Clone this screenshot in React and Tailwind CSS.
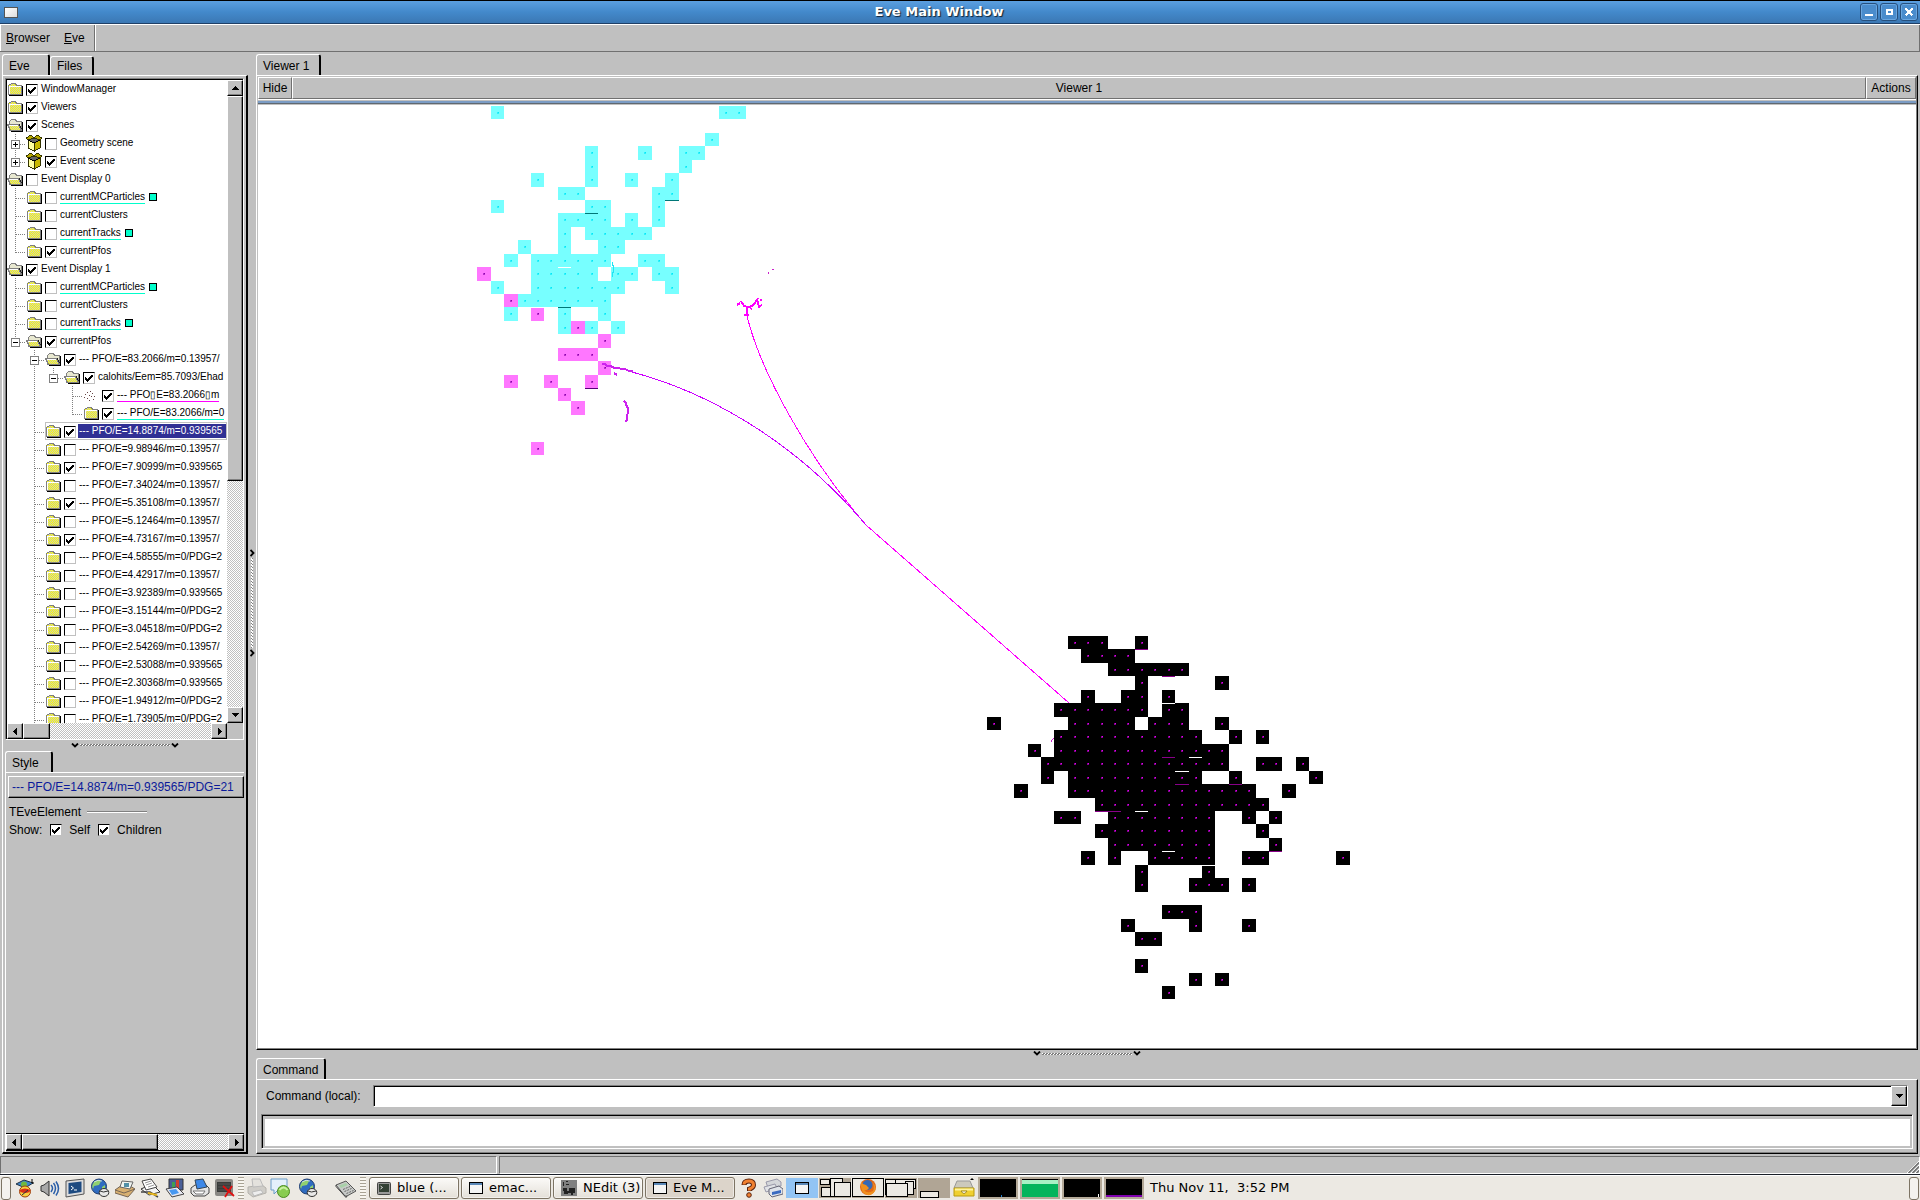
import React, { useId } from "react";

const RAISED =
  "border border-t-white border-l-white border-b-black border-r-black shadow-[inset_-1px_-1px_0_#808080]";
const DITHER =
  "bg-[repeating-conic-gradient(#c0c0c0_0_25%,#ffffff_0_50%)] bg-[length:2px_2px]";

/* ---------- tree data: guides use | T L or . for each level ---------- */
const pfo = (text, checked, extra = {}) => ({ g: ".T", icon: "folder", checked, text: "--- PFO/E=" + text, ...extra });
const ROWS = [
  { g: "", icon: "folder", checked: true, text: "WindowManager" },
  { g: "", icon: "folder", checked: true, text: "Viewers" },
  { g: "", icon: "open", checked: true, text: "Scenes" },
  { g: "T", box: "+", icon: "scene", text: "Geometry scene" },
  { g: "L", box: "+", icon: "scene", checked: true, text: "Event scene" },
  { g: "", icon: "open", text: "Event Display 0" },
  { g: "T", icon: "folder", text: "currentMCParticles", mark: "c", square: true },
  { g: "T", icon: "folder", text: "currentClusters" },
  { g: "T", icon: "folder", text: "currentTracks", mark: "c", square: true },
  { g: "L", icon: "folder", checked: true, text: "currentPfos" },
  { g: "", icon: "open", checked: true, text: "Event Display 1" },
  { g: "T", icon: "folder", text: "currentMCParticles", mark: "c", square: true },
  { g: "T", icon: "folder", text: "currentClusters" },
  { g: "T", icon: "folder", text: "currentTracks", mark: "c", square: true },
  { g: "L", box: "-", icon: "open", checked: true, text: "currentPfos" },
  pfo("83.2066/m=0.13957/", true, { box: "-", icon: "open" }),
  { g: ".|L", box: "-", icon: "open", checked: true, text: "calohits/Eem=85.7093/Ehad" },
  { g: ".|.T", icon: "dots", checked: true, text: "--- PFO▯E=83.2066▯m", mark: "m" },
  { g: ".|.L", icon: "folder", checked: true, text: "--- PFO/E=83.2066/m=0", mark: "c" },
  pfo("14.8874/m=0.939565", true, { selected: true }),
  pfo("9.98946/m=0.13957/", false),
  pfo("7.90999/m=0.939565", true),
  pfo("7.34024/m=0.13957/", false),
  pfo("5.35108/m=0.13957/", true),
  pfo("5.12464/m=0.13957/", false),
  pfo("4.73167/m=0.13957/", true),
  pfo("4.58555/m=0/PDG=2", false),
  pfo("4.42917/m=0.13957/", false),
  pfo("3.92389/m=0.939565", false),
  pfo("3.15144/m=0/PDG=2", false),
  pfo("3.04518/m=0/PDG=2", false),
  pfo("2.54269/m=0.13957/", false),
  pfo("2.53088/m=0.939565", false),
  pfo("2.30368/m=0.939565", false),
  pfo("1.94912/m=0/PDG=2", false),
  pfo("1.73905/m=0/PDG=2", false),
];

function Guide({ kind, box }) {
  return (
    <svg width="19" height="18" shapeRendering="crispEdges" className="shrink-0" aria-hidden="true">
      <g stroke="#808080" strokeDasharray="1 1" fill="none">
        {kind !== "." && <path d={kind === "L" ? "M8.5 0V11" : "M8.5 0V18"} />}
        {(kind === "T" || kind === "L") && <path d="M9 10.5H19" />}
      </g>
      {box && (
        <g>
          <rect x="4.5" y="6.5" width="8" height="8" fill="#fff" stroke="#808080" />
          <path d={box === "+" ? "M6 10.5H11M8.5 8V13" : "M6 10.5H11"} stroke="#000" />
        </g>
      )}
    </svg>
  );
}

function TreeIcon({ kind }) {
  return (
    <svg width="17" height="18" shapeRendering="crispEdges" className="mr-[2px] shrink-0" aria-hidden="true">
      {kind === "folder" && (
        <g>
          <path d="M15.5 6V16M2 15.5H16" stroke="#000" />
          <path d="M1.5 14.5V5.5L2.5 4.5H3.5L4.5 3.5H8.5L9.5 5.5H14.5V14.5Z" fill="url(#dither)" stroke="#808080" />
          <path d="M2.5 14V6.5H14" stroke="#fff" fill="none" />
        </g>
      )}
      {kind === "open" && (
        <g>
          <path d="M15.5 6V16M4 15.5H16" stroke="#000" />
          <path d="M2.5 14.5V5.5L4.5 3.5H8.5L9.5 5.5H14.5V14.5Z" fill="#e8e8d0" stroke="#808080" />
          <path d="M0.5 8.5H11.5L14.5 14.5H3.5Z" fill="url(#dither)" stroke="#808080" />
          <path d="M2 9.5H11" stroke="#fff" />
          <path d="M12 8L14.5 13" stroke="#222" />
        </g>
      )}
      {kind === "scene" && (
        <g>
          <path d="M2 6L8 9V17L2 14Z" fill="#ffffa0" stroke="#333300" />
          <path d="M8 9L14 6V14L8 17Z" fill="#c8b800" stroke="#333300" />
          <path d="M2 6L8 3L14 6L8 9Z" fill="#666" stroke="#000" />
          <path d="M2 6L0 4L5 1L8 4ZM14 6L16 4L11 1L8 4Z" fill="#b8a800" stroke="#333300" />
        </g>
      )}
      {kind === "dots" && (
        <g fill="#664444">
          {[[2, 8], [4, 6], [6, 9], [4, 12], [9, 7], [8, 10], [6, 14], [10, 13], [7, 5], [1, 11], [11, 10]].map(([x, y]) => (
            <rect key={x + "-" + y} x={x} y={y} width="1" height="1" />
          ))}
        </g>
      )}
    </svg>
  );
}

function Check({ id, checked }) {
  return (
    <span className="grid size-3 shrink-0">
      <input
        id={id}
        type="checkbox"
        defaultChecked={checked}
        className="peer col-start-1 row-start-1 size-3 appearance-none border border-t-black border-l-black border-b-[#c0c0c0] border-r-[#c0c0c0] bg-white"
      />
      <svg
        viewBox="0 0 12 12"
        shapeRendering="crispEdges"
        className="pointer-events-none invisible col-start-1 row-start-1 size-3 peer-checked:visible"
        aria-hidden="true"
      >
        <path d="M2 5h1v1h1v1h1V6h1V5h1V4h1V3h2v2H9v1H8v1H7v1H6v1H5V10H4V9H3V8H2Z" />
      </svg>
    </span>
  );
}

function TreeRow({ row }) {
  const id = useId();
  const guides = row.g.split("");
  const mark = row.mark === "c" ? "border-b border-[#00ffcc]" : row.mark === "m" ? "border-b border-[#ff00ff]" : "";
  return (
    <li className="flex h-[18px] items-center overflow-hidden whitespace-nowrap">
      {guides.map((k, i) => (
        <Guide key={i} kind={k} box={i === guides.length - 1 ? row.box : undefined} />
      ))}
      <div
        className={
          row.selected
            ? "flex h-[18px] min-w-0 flex-1 items-center outline outline-1 -outline-offset-1 outline-[#c0c0c0]"
            : "flex h-[18px] min-w-0 flex-1 items-center"
        }
      >
        <TreeIcon kind={row.icon} />
        <span className="mt-0.5 flex">
          <Check id={id} checked={row.checked} />
        </span>
        <label
          htmlFor={id}
          className={
            row.selected
              ? "ml-0.5 h-[14px] flex-1 bg-[#303094] pl-px leading-[14px] text-white"
              : "ml-[3px] h-[14px] leading-[14px] " + mark
          }
        >
          {row.text}
        </label>
        {row.square && <span className="ml-1 size-2 border border-black bg-[#00ffcc]" />}
      </div>
    </li>
  );
}

function Arrow({ dir }) {
  const d = {
    up: "M4 2h1v1h1v1h1v1h1v1H1V5h1V4h1V3h1Z",
    down: "M1 2h7v1H7v1H6v1H5v1H4V5H3V4H2V3H1Z",
    left: "M2 4h1V3h1V2h1V1h1v7H5V7H4V6H3V5H2Z",
    right: "M3 1h1v1h1v1h1v1h1v1H6v1H5v1H4v1H3Z",
  }[dir];
  return (
    <svg width="9" height="9" shapeRendering="crispEdges" aria-hidden="true">
      <path d={d} />
    </svg>
  );
}

function ScrollButton({ dir, label }) {
  return (
    <button aria-label={label} className={"flex size-4 shrink-0 items-center justify-center bg-[#c0c0c0] " + RAISED}>
      <Arrow dir={dir} />
    </button>
  );
}

function Tab({ children, active, className = "" }) {
  return (
    <button
      role="tab"
      aria-selected={!!active}
      className={
        "flex items-center whitespace-nowrap rounded-t-[3px] border-t border-l border-r-2 border-t-white border-l-white border-r-black bg-[#c0c0c0] pl-1.5 " +
        (active ? "-mb-px h-[22px] " : "h-[19px] ") +
        className
      }
    >
      {children}
    </button>
  );
}

function HSplit() {
  return (
    <div className="flex h-full items-center justify-center gap-px">
      <Chevron />
      <div className="h-[2px] w-[90px] bg-[repeating-conic-gradient(#808080_0_25%,#ffffff_0_50%)] bg-[length:3px_2px]" />
      <Chevron />
    </div>
  );
}
function Chevron() {
  return (
    <svg width="8" height="5" aria-hidden="true">
      <path d="M1 0.5L4 3.5L7 0.5" stroke="#000" strokeWidth="1.8" fill="none" />
    </svg>
  );
}

/* ---------- calorimeter hits ---------- */
const range = (a, b) => Array.from({ length: b - a + 1 }, (_, i) => a + i);
const expand = (table) =>
  table.flatMap(([row, ...spans]) =>
    spans.flatMap((s) => (Array.isArray(s) ? range(s[0], s[1]) : [s]).map((c) => [c, row]))
  );
const CYAN = expand([
  [0, 1, 18, 19], [2, 17], [3, 8, 12, 15, 16], [4, 8, 15], [5, 4, 8, 11, 14], [6, 6, 7, 13, 14],
  [7, 1, 8, 9, 13], [8, [6, 9], 11, 13], [9, 6, [8, 12]], [10, 3, 6, 9, 10], [11, 2, [4, 9], 12, 13],
  [12, [4, 8], 10, 11, 13, 14], [13, 1, [4, 10], 14], [14, [3, 9]], [15, 2, 6, 9], [16, 6, 8, 10],
]);
const PINK = expand([
  [12, 0], [14, 2], [15, 4], [16, 7], [17, 9], [18, 6, 7, 8], [19, 9], [20, 2, 5, 8], [21, 6], [22, 7], [25, 4],
]);
const BLACK = expand([
  [0, 6, 7, 8, 11], [1, [7, 10]], [2, [9, 14]], [3, 11, 17], [4, 7, 10, 11, 13], [5, [5, 11], 13, 14],
  [6, 0, [6, 10], [12, 14], 17], [7, [5, 15], 18, 20], [8, 3, [5, 17]], [9, [4, 17], 20, 21, 23],
  [10, 4, [6, 15], 18, 24], [11, 2, [6, 19], 22], [12, [8, 20]], [13, 5, 6, [9, 16], 19, 21],
  [14, [8, 16], 20], [15, [9, 16], 21], [16, 7, 9, [12, 16], 19, 20, 26], [17, 11, 16],
  [18, 11, [15, 17], 19], [20, 13, 14, 15], [21, 10, 15, 19], [22, 11, 12], [24, 11], [25, 15, 17], [26, 13],
]);
const colX = (x0, c) => Math.round(x0 + 0.25 + 13.42 * c);

function Hits({ cells, x0, y0, pitch, fill, dot }) {
  const y = (r) => Math.round(y0 + pitch * r);
  return (
    <g>
      {cells.map(([c, r]) => {
        const x = colX(x0, c);
        return <rect key={c + "," + r} x={x} y={y(r)} width={colX(x0, c + 1) - x} height={y(r + 1) - y(r)} fill={fill} />;
      })}
      {cells.map(([c, r]) => (
        <g key={"d" + c + "," + r} fill={dot}>
          <rect x={colX(x0, c) + 6} y={y(r) + 6} width="2" height="2" opacity="0.6" />
          <rect x={colX(x0, c) + 7} y={y(r) + 6} width="1" height="1" />
        </g>
      ))}
    </g>
  );
}
function Edges({ list, x0, y0, pitch, fill }) {
  return list.map(([c, r]) => (
    <rect
      key={c + "," + r}
      x={colX(x0, c)}
      y={Math.round(y0 + pitch * (r + 1))}
      width={colX(x0, c + 1) - colX(x0, c)}
      height="1"
      fill={fill}
    />
  ));
}

function EventDisplay() {
  const a = { x0: 477, y0: 106, pitch: 13.43 };
  const b = { x0: 987, y0: 636, pitch: 13.46 };
  return (
    <svg className="block h-full w-full bg-white" role="img" aria-label="Event display" shapeRendering="crispEdges">
      <g transform="translate(-258 -105)">
        <Hits cells={CYAN} {...a} fill="#77ffff" dot="#00e8f8" />
        <Hits cells={PINK} {...a} fill="#ff77ff" dot="#8800aa" />
        <Edges {...a} list={[[8, 7], [14, 6], [6, 14]]} fill="#007777" />
        <Edges {...a} list={[[8, 20]]} fill="#550077" />
        <Edges {...a} list={[[6, 11], [4, 14]]} fill="#ffffff" />
        <path d="M612 262v3h1v7h-1v5" stroke="#22e4f4" fill="none" />
        <Hits cells={BLACK} {...b} fill="#000" dot="#e000f0" />
        <Edges {...b} list={[[13, 4], [15, 8], [14, 9], [11, 12], [13, 15], [16, 16]]} fill="#ffffff" />
        <Edges {...b} list={[[11, 0], [13, 2], [13, 8], [14, 10], [18, 10], [8, 12], [9, 12], [21, 15]]} fill="#880088" />
        <g fill="none">
          <path d="M747 316C760 370 807 457 866 525L1069 703" stroke="#ff00ff" />
          <path d="M632 372C700 390 790 435 866 525" stroke="#cc00ff" />
          <path d="M602 364h3l2 2h4l3 2h5l2 1h4l4 2h4M614 373l3 2M624 401l2 2v2l2 3v5l-1 2v4l-1 3" stroke="#cc22ee" strokeWidth="2" />
          <path d="M737 305l3-2M741 301l3 5 4 1 4-1 3-3 3-5M747 307v9M744 315h5M758 301l1 7M760 306l2-1M760 300h2M750 308l2 1" stroke="#ff00ff" strokeWidth="2" />
          <path d="M768 274l1-2M772 269h2M1051 742l1-2M1052 740l2-2" stroke="#cc22cc" />
        </g>
      </g>
    </svg>
  );
}

/* ---------- desktop panel icons ---------- */
const Icon = ({ children }) => (
  <svg viewBox="0 0 20 20" className="size-5 shrink-0" aria-hidden="true">
    {children}
  </svg>
);
const MenuIcon = () => (
  <Icon>
    <path d="M1 6L9 2L18 5L10 10Z" fill="#3f86cc" stroke="#234" />
    <circle cx="9" cy="6.500" r="3" fill="#70b840" />
    <circle cx="10" cy="13.500" r="5.500" fill="#f8d040" stroke="#a04010" />
    <path d="M4.500 12q5.500-3 11 0l-1 2q-4 2-9 0Z" fill="#d83018" />
    <path d="M7 17l6-5" stroke="#234" />
    <path d="M17 1v4h2" stroke="#000" fill="none" />
  </Icon>
);
const SpeakerIcon = () => (
  <Icon>
    <path d="M1 8L4 7L9 3V18L4 14L1 13Z" fill="#a8a8a8" stroke="#333" />
    <path d="M11 7q3 3 0 7M13.500 5q4 5 0 11M16 3.500q5 7 0 14" stroke="#2a5ea8" strokeWidth="1.500" fill="none" />
  </Icon>
);
const TerminalIcon = () => (
  <Icon>
    <path d="M1 3L19 1V16L1 19Z" fill="#ddd" stroke="#555" />
    <path d="M3.500 5L16.500 3.500V14L3.500 16Z" fill="#1d4a80" />
    <path d="M6 8l2.500 2L6 12M9 12h3" stroke="#fff" fill="none" />
  </Icon>
);
const GlobeIcon = () => (
  <Icon>
    <circle cx="9" cy="8.500" r="7.500" fill="#2f6cc0" stroke="#1d3c70" />
    <path d="M4 4q4-3 7-1l-2 4-5 1-1 3Q1 8 4 4ZM12 9l3-2v4l-3 1Z" fill="#90d070" />
    <path d="M4 4q4-3 8-1" stroke="#fff" opacity=".7" fill="none" />
    <ellipse cx="14" cy="14.500" rx="4.800" ry="4" fill="#e8e8e8" stroke="#333" />
    <path d="M10 13q3 2 8 0" stroke="#333" fill="none" />
  </Icon>
);
const MailIcon = () => (
  <Icon>
    <path d="M0 12L10 5L20 11L13 19L0 15Z" fill="#d8b070" stroke="#765" />
    <path d="M7 3L18 4L15 11L5 9Z" fill="#f0f4f0" stroke="#666" />
    <rect x="9" y="5" width="5" height="4" fill="#5090a8" />
    <path d="M0 12l9 3 11-4" stroke="#765" fill="none" />
  </Icon>
);
const PapersIcon = () => (
  <Icon>
    <path d="M1 11L12 6L20 14L9 17Z" fill="#f4f4f4" stroke="#333" />
    <path d="M2 3L11 1L17 9L6 12Z" fill="#fff" stroke="#444" />
    <path d="M5 5l6-2M6 7l6-2M8 9l6-2" stroke="#999" />
    <path d="M1 14h9l8 5" stroke="#444" strokeWidth="1.500" fill="none" />
    <path d="M8 15l9 2" stroke="#e8b820" strokeWidth="2" />
  </Icon>
);
const SlidesIcon = () => (
  <Icon>
    <path d="M4 1H18V12H4Z" fill="#4a5f98" stroke="#333" />
    <rect x="7" y="4" width="3" height="6" fill="#40a050" />
    <rect x="11" y="2" width="3" height="8" fill="#d04030" />
    <path d="M1 11L12 9L19 16L7 19Z" fill="#e8e8f0" stroke="#444" />
    <path d="M4 12L11 11L14 15L7 17Z" fill="#4898f0" />
  </Icon>
);
const PrinterIcon = () => (
  <Icon>
    <path d="M1 10L5 7H16L19 10V15L15 18H4L1 15Z" fill="#e4e4e4" stroke="#444" />
    <path d="M5 2L13 1L17 9L7 11Z" fill="#3d88e8" stroke="#345" />
    <path d="M3 13h12l-2 3H6Z" fill="#fff" stroke="#777" />
  </Icon>
);
const DeadScreenIcon = () => (
  <Icon>
    <rect x="0" y="1" width="18" height="17" rx="2" fill="#8a8884" />
    <rect x="2" y="4" width="14" height="10" fill="#3a3d3a" />
    <path d="M3 6h12M3 9h12M3 12h12" stroke="#555" />
    <path d="M8 8l11 10M17 8l-7 11" stroke="#e01010" strokeWidth="1.800" />
  </Icon>
);
const GreyPrinterIcon = () => (
  <Icon>
    <path d="M1 9L15 7L19 10V15L6 19L1 15Z" fill="#cfcdc8" stroke="#b4b2ac" />
    <path d="M5 1H13L16 8L6 9Z" fill="#e4e2dd" stroke="#bbb" />
    <path d="M5 14l9-2 2 3-9 3Z" fill="#eee" stroke="#bbb" />
  </Icon>
);
const ChatIcon = () => (
  <Icon>
    <path d="M1 1H17V12H8L4 16V12H1Z" fill="#e4f0fb" stroke="#6a9cc8" />
    <circle cx="13.500" cy="13.500" r="6" fill="#88cc50" stroke="#4a8a20" />
    <path d="M9.500 12q4-5 8 0" stroke="#c8f0a0" strokeWidth="2" fill="none" />
  </Icon>
);
const CalcIcon = () => (
  <svg viewBox="0 0 22 20" className="h-5 w-[22px] shrink-0" aria-hidden="true">
    <path d="M1 7L11 3L21 13L12 18L10 18Z" fill="#c8cac8" stroke="#555" />
    <path d="M4 7.500L11 5L13 7L6 10Z" fill="#a8d0a8" />
    <path d="M8 11.500l7-3M9.500 13.500l7-3M11.500 15.500l7-3" stroke="#666" strokeDasharray="2 1" />
    <path d="M1 7v1.500L11 19.500l1-1.500" stroke="#444" fill="none" />
  </svg>
);
const HelpIcon = () => (
  <svg viewBox="0 0 16 20" className="h-5 w-4" aria-hidden="true">
    <path d="M3 7Q3 3 8 3Q12.500 3 12.500 7Q12.500 9.500 8.500 11V13" stroke="#5b2410" strokeWidth="5" fill="none" />
    <path d="M3 6.500Q3 3 8 3Q12.500 3 12.500 7Q12.500 9.500 8.500 11V12.500" stroke="#f08030" strokeWidth="3" fill="none" />
    <circle cx="8" cy="17" r="2.300" fill="#f08030" stroke="#5b2410" />
  </svg>
);
const DrivesIcon = () => (
  <Icon>
    <path d="M3 4L14 1L18 4V8L5 10Z" fill="#d4d6da" stroke="#99a" />
    <path d="M1 9L12 6L14 10L3 14Z" fill="#e0e2e6" stroke="#99a" />
    <path d="M6 11L16 8L20 11V16L9 19L6 16Z" fill="#dfe3ea" stroke="#667" />
    <path d="M9 14l9-2v3l-9 2Z" fill="#3a6ac0" />
  </Icon>
);
const DrawerIcon = () => (
  <svg viewBox="0 0 22 20" className="h-5 w-[22px]" aria-hidden="true">
    <path d="M4 3H17L20 10H1Z" fill="#ccc9bc" stroke="#999" />
    <path d="M1 10H21V18H1Z" fill="#f0d030" stroke="#b89a10" />
    <path d="M2 11.500h18" stroke="#fff4a0" strokeWidth="2" />
    <path d="M8 13q3 5 6 0Z" fill="#fff" stroke="#a08a20" />
    <path d="M17 2l2-2 2 2Z" fill="#000" />
  </svg>
);
const WindowGlyph = () => (
  <svg width="14" height="12" shapeRendering="crispEdges" aria-hidden="true">
    <rect x="0.500" y="0.500" width="13" height="11" fill="#f4f4f4" stroke="#000" />
    <rect x="1" y="1" width="12" height="2" fill="#5a88b8" />
  </svg>
);
const TermGlyph = () => (
  <svg width="14" height="13" aria-hidden="true">
    <rect x="0.500" y="0.500" width="13" height="12" rx="1" fill="#999" stroke="#444" />
    <rect x="2" y="2" width="10" height="8" fill="#334034" />
    <path d="M3.500 4l2 1.500-2 1.500" stroke="#ddd" fill="none" />
  </svg>
);
const NeditGlyph = () => (
  <svg width="16" height="16" shapeRendering="crispEdges" aria-hidden="true">
    <rect width="16" height="16" fill="#808080" />
    <path d="M2 2h1v4H2ZM5 1h2v1H5ZM5 4h3v1H5ZM2 8h4v3h2V8h6v5h-2v2h-2v-2H7v1H3Z" fill="#222" />
  </svg>
);

const Grip = () => (
  <span className="mx-[3px] h-[22px] w-1.5 shrink-0 bg-[repeating-linear-gradient(#a8a294_0_1px,#f8f6f0_1px_3px)]" />
);

function Task({ icon, children, active }) {
  return (
    <button
      className={
        "flex h-[22px] w-[90px] shrink-0 items-center gap-1.5 whitespace-nowrap rounded-[3px] border border-[#7d7464] pl-[7px] shadow-[inset_0_0_0_1px_#ffffff80] " +
        (active ? "bg-[#dcd4ca]" : "bg-linear-to-b from-[#fbfaf8] to-[#e4e0d8]")
      }
    >
      {icon}
      <span>{children}</span>
    </button>
  );
}
const Monitor = ({ children }) => (
  <span className="flex h-[22px] w-10 shrink-0 flex-col justify-end border-2 border-[#b4a998] bg-black">{children}</span>
);

const iconButtons = [
  ["Menu", <MenuIcon />], ["Volume", <SpeakerIcon />], ["Terminal", <TerminalIcon />], ["Web browser", <GlobeIcon />],
  ["Mail", <MailIcon />], ["Writer", <PapersIcon />], ["Impress", <SlidesIcon />], ["Printer", <PrinterIcon />],
  ["Lock screen", <DeadScreenIcon />],
];

function Desk({ children, label, active }) {
  return (
    <button
      aria-label={label}
      className={"flex h-5 w-8 shrink-0 items-center justify-center overflow-hidden " + (active ? "bg-[#92c4f4]" : "bg-[#b0a595]")}
    >
      {children}
    </button>
  );
}

function Taskbar() {
  return (
    <footer className="flex h-[25px] shrink-0 items-center overflow-hidden border-t border-white bg-[#ece9e3] font-['DejaVu_Sans',sans-serif] text-[13px]">
      <button aria-label="Hide panel left" className="ml-px mr-1 h-[23px] w-2.5 shrink-0 rounded-[3px] border border-[#7d7464] bg-[#f4f2ee]" />
      <div className="flex gap-[5px]">
        {iconButtons.map(([name, icon]) => (
          <button key={name} aria-label={name}>{icon}</button>
        ))}
      </div>
      <Grip />
      <button aria-label="Print queue"><GreyPrinterIcon /></button>
      <button aria-label="Messages" className="ml-[3px]"><ChatIcon /></button>
      <button aria-label="Network" className="ml-2"><GlobeIcon /></button>
      <button aria-label="Calculator" className="ml-[17px]"><CalcIcon /></button>
      <Grip />
      <div className="flex gap-0.5">
        <Task icon={<TermGlyph />}>blue (...</Task>
        <Task icon={<WindowGlyph />}>emac...</Task>
        <Task icon={<NeditGlyph />}>NEdit (3)</Task>
        <Task active icon={<WindowGlyph />}>Eve M...</Task>
      </div>
      <button aria-label="Help" className="ml-1.5"><HelpIcon /></button>
      <button aria-label="Drives" className="ml-1.5"><DrivesIcon /></button>
      <div className="ml-[3px] flex gap-px">
        <Desk active label="Desktop 1"><WindowGlyph /></Desk>
        <Desk label="Desktop 2">
          <svg width="32" height="20" shapeRendering="crispEdges" fill="#ece9e3" stroke="#000">
            <path d="M1.500 1.500h9v5h-9ZM2.500 9.500h9v9h-9Z" />
            <path d="M11.500 0.500h12v18h-12Z" />
            <path d="M15.500 4.500h16v14h-16Z" />
          </svg>
        </Desk>
        <Desk label="Desktop 3">
          <svg width="32" height="20">
            <rect x="0.500" y="0.500" width="31" height="18" fill="#ece9e3" stroke="#000" />
            <circle cx="16" cy="9" r="8" fill="#e06818" />
            <circle cx="15.500" cy="7" r="5" fill="#3468b8" />
            <path d="M9 4q2 3 5 3l3 3q-2 3-5 2 3 4 9 1 2-5-1-9 5 4 3 9-3 5-8 4-7-2-6-13Z" fill="#f09020" />
          </svg>
        </Desk>
        <Desk label="Desktop 4">
          <svg width="32" height="20" shapeRendering="crispEdges" fill="#ece9e3" stroke="#000">
            <path d="M0.500 1.500h10v15h-10Z" />
            <path d="M10.500 1.500h20v9h-20Z" />
            <path d="M20.500 3.500h8v13h-8Z" />
            <path d="M1.500 5.500h21v13h-21Z" />
          </svg>
        </Desk>
        <Desk label="Desktop 5">
          <svg width="32" height="20" shapeRendering="crispEdges" fill="#ece9e3" stroke="#000">
            <rect x="2.500" y="13.500" width="18" height="6" />
          </svg>
        </Desk>
      </div>
      <button aria-label="Files" className="ml-[3px]"><DrawerIcon /></button>
      <div className="ml-[3px] flex gap-0.5">
        <Monitor><span className="ml-[21px] h-0.5 w-px bg-[#2080d0]" /></Monitor>
        <Monitor>
          <span className="h-1 bg-[#a8f0c4]" />
          <span className="h-[13px] bg-[#04b45c]" />
        </Monitor>
        <Monitor><span className="mr-px h-[3px] w-px self-end bg-white" /></Monitor>
        <Monitor><span className="h-0.5 bg-[#8000b0]" /></Monitor>
      </div>
      <time className="ml-1.5 whitespace-pre">Thu Nov 11,  3:52 PM</time>
      <button aria-label="Hide panel right" className="ml-auto mr-px h-[23px] w-2.5 shrink-0 rounded-[3px] border border-[#7d7464] bg-[#f4f2ee]" />
    </footer>
  );
}

function TitleButton({ label, children }) {
  return (
    <button
      aria-label={label}
      className="flex size-[18px] items-center justify-center rounded-[3px] border border-[#264f7c] bg-[#4a8ccc] shadow-[inset_0_0_0_1px_#6aa6e0]"
    >
      <svg width="10" height="10" shapeRendering="crispEdges" fill="none" stroke="#fff" strokeWidth="2">{children}</svg>
    </button>
  );
}

function TitleBar() {
  return (
    <header className="flex h-6 shrink-0 items-center border-t border-b border-t-black border-b-[#1f3f66] bg-linear-to-b from-[#5b9fe0] via-[#4389cb] to-[#3b78b4] px-0.5">
      <div className="ml-0.5 h-[11px] w-3.5 border border-[#555] bg-linear-to-br from-white to-[#ddd]" />
      <h1 className="flex-1 text-center font-['DejaVu_Sans',sans-serif] text-[13px] font-bold text-white [text-shadow:1px_1px_1px_#123]">Eve Main Window</h1>
      <div className="flex justify-end gap-0.5">
        <TitleButton label="Minimize"><path d="M1 8H9" /></TitleButton>
        <TitleButton label="Maximize"><rect x="3" y="3" width="5" height="4" strokeWidth="1.500" /></TitleButton>
        <TitleButton label="Close"><path d="M1.500 1.500L8.500 8.500M8.500 1.500L1.500 8.500" /></TitleButton>
      </div>
    </header>
  );
}

function LeftPanel() {
  return (
    <aside className="flex w-[248px] shrink-0 flex-col pl-0.5">
      <div role="tablist" className="flex h-[23px] shrink-0 items-end">
        <Tab active className="w-12">Eve</Tab>
        <Tab className="w-11">Files</Tab>
      </div>
      <div className="flex min-h-0 flex-1 flex-col border-t border-l border-r-2 border-b-2 border-t-white border-l-white border-r-black border-b-black pr-0.5 pl-0.5 pt-0.5">
        <div className="flex h-[662px] shrink-0 flex-col border border-t-[#808080] border-l-[#808080] border-r-white border-b-white">
          <div className="flex min-h-0 flex-1 border-t border-l border-black">
            <ul className="h-full min-w-0 flex-1 overflow-hidden bg-white text-[10px]">
              {ROWS.map((r, i) => <TreeRow key={i} row={r} />)}
            </ul>
            <div className={"flex w-4 shrink-0 flex-col " + DITHER}>
              <ScrollButton dir="up" label="Scroll up" />
              <div className={"h-[385px] bg-[#c0c0c0] " + RAISED} />
              <div className="flex-1" />
              <ScrollButton dir="down" label="Scroll down" />
            </div>
          </div>
          <div className="flex h-4 shrink-0 border-l border-black">
            <div className={"flex min-w-0 flex-1 " + DITHER}>
              <ScrollButton dir="left" label="Scroll left" />
              <div className={"w-[27px] bg-[#c0c0c0] " + RAISED} />
              <div className="flex-1" />
              <ScrollButton dir="right" label="Scroll right" />
            </div>
            <div className="w-4 shrink-0" />
          </div>
        </div>
        <div className="h-[10px] shrink-0"><HSplit /></div>
        <div role="tablist" className="flex h-[22px] shrink-0 items-end">
          <Tab active className="w-12">Style</Tab>
        </div>
        <section className="flex min-h-0 flex-1 flex-col border-t border-l border-white">
          <div className="flex-1 overflow-hidden pl-0.5 pt-[3px]">
            <button className={"flex h-[22px] w-full items-center whitespace-nowrap pl-[3px] text-[#0a1a9a] " + RAISED}>
              --- PFO/E=14.8874/m=0.939565/PDG=21
            </button>
            <div className="mt-[5px] flex h-[18px] items-center gap-1.5 pl-px">
              TEveElement
              <span className="h-0.5 w-[60px] border-t border-b border-t-[#808080] border-b-white" />
            </div>
            <div className="flex h-[18px] items-center pl-px">
              <span>Show:</span>
              <span className="ml-2 flex"><Check id="show-self" checked /></span>
              <label htmlFor="show-self" className="ml-[7px]">Self</label>
              <span className="ml-2 flex"><Check id="show-children" checked /></span>
              <label htmlFor="show-children" className="ml-[7px]">Children</label>
            </div>
          </div>
          <div className={"flex h-[18px] shrink-0 border-t border-b border-black " + DITHER}>
            <ScrollButton dir="left" label="Scroll style left" />
            <div className={"w-[136px] bg-[#c0c0c0] " + RAISED} />
            <div className="flex-1" />
            <ScrollButton dir="right" label="Scroll style right" />
          </div>
          <div className="h-px shrink-0 bg-[#c0c0c0]" />
        </section>
      </div>
    </aside>
  );
}

function VSplit() {
  return (
    <div className="flex w-2 shrink-0 flex-col items-center justify-center gap-px">
      <svg width="5" height="8" aria-hidden="true"><path d="M0.500 1L3.500 4L0.500 7" stroke="#000" strokeWidth="1.800" fill="none" /></svg>
      <div className="h-[90px] w-[2px] bg-[repeating-conic-gradient(#808080_0_25%,#ffffff_0_50%)] bg-[length:2px_3px]" />
      <svg width="5" height="8" aria-hidden="true"><path d="M0.500 1L3.500 4L0.500 7" stroke="#000" strokeWidth="1.800" fill="none" /></svg>
    </div>
  );
}

const HEAD = "flex items-center justify-center border border-t-white border-l-white border-r-[#707070] border-b-[#707070]";

function RightSide() {
  return (
    <main className="flex min-w-0 flex-1 flex-col pr-0.5">
      <div role="tablist" className="flex h-[23px] shrink-0 items-end">
        <Tab active className="w-[65px]">Viewer 1</Tab>
      </div>
      <section className="flex min-h-0 flex-1 flex-col border-t border-l border-r border-b border-t-white border-l-white border-r-black border-b-black">
        <div className="flex min-h-0 flex-1 flex-col border-r border-b border-[#808080] pl-px pt-px">
          <div className="flex h-[22px] shrink-0">
            <button className={"w-[34px] " + HEAD}>Hide</button>
            <div className={"flex-1 " + HEAD}>Viewer 1</div>
            <button className={"w-[50px] " + HEAD}>Actions</button>
          </div>
          <div className="flex h-[5px] shrink-0 flex-col border-t border-b border-t-white border-b-[#606870] pt-px">
            <div className="h-0.5 bg-[#7b9cc4]" />
          </div>
          <div className="min-h-0 flex-1 border-t border-[#c0c0c0]">
            <EventDisplay />
          </div>
        </div>
      </section>
      <div className="h-[7px] shrink-0"><HSplit /></div>
      <div role="tablist" className="flex h-[22px] shrink-0 items-end">
        <Tab active className="w-[70px]">Command</Tab>
      </div>
      <section className="h-[75px] shrink-0 border border-t-white border-l-white border-r-black border-b-black pl-1 pr-1 pt-[5px] shadow-[inset_-1px_-1px_0_#808080]">
        <div className="flex items-center pl-[5px] pr-[5px]">
          <label htmlFor="command" className="mr-2.5 w-[97px] whitespace-nowrap">Command (local):</label>
          <div className="flex h-[22px] min-w-0 flex-1 border border-t-[#808080] border-l-[#808080] border-r-white border-b-white">
            <input id="command" type="text" className="min-w-0 flex-1 border-t border-l border-black bg-white px-1 outline-none" />
            <button aria-label="Command history" className={"flex w-4 items-center justify-center bg-[#c0c0c0] " + RAISED}>
              <Arrow dir="down" />
            </button>
          </div>
        </div>
        <div className="mt-[7px] flex h-[35px] border border-t-[#808080] border-l-[#808080] border-r-white border-b-white">
          <div className="flex flex-1 border-t border-l border-black p-[2px] pt-[3px]">
            <textarea aria-label="Command output" readOnly className="block min-w-0 flex-1 resize-none bg-white outline-none" />
          </div>
        </div>
      </section>
    </main>
  );
}

export default function App() {
  return (
    <div className="flex h-screen flex-col overflow-hidden bg-[#c0c0c0] font-['Liberation_Sans',Arial,sans-serif] text-xs text-black">
      <svg width="0" height="0" className="absolute" aria-hidden="true">
        <defs>
          <pattern id="dither" width="2" height="2" patternUnits="userSpaceOnUse">
            <rect width="2" height="2" fill="#ffff00" />
            <rect width="1" height="1" fill="#c8c8c0" />
            <rect x="1" y="1" width="1" height="1" fill="#c8c8c0" />
          </pattern>
        </defs>
      </svg>
      <TitleBar />
      <nav className="flex h-7 shrink-0 border-t border-b border-t-white border-b-[#707070]">
        <div className="flex w-[95px] items-center gap-3.5 border-r border-l border-l-white border-r-[#707070] pl-[5px]">
          <button><span className="underline">B</span>rowser</button>
          <button><span className="underline">E</span>ve</button>
        </div>
        <div className="flex-1 border-l border-r border-l-white border-r-[#707070]" />
      </nav>
      <div className="flex min-h-0 flex-1">
        <LeftPanel />
        <VSplit />
        <RightSide />
      </div>
      <div className="mt-0.5 flex h-[18px] shrink-0 gap-0.5">
        <div className="w-[497px] border border-t-[#707070] border-l-[#707070] border-r-white border-b-white" />
        <div className="flex flex-1 items-end justify-end border border-t-[#707070] border-l-[#707070] border-r-white border-b-white">
          <svg width="12" height="12" aria-hidden="true">
            <path d="M0 12L12 0M4 12L12 4M8 12L12 8" stroke="#fff" />
            <path d="M1.500 12L12 1.500M5.500 12L12 5.500M9.500 12L12 9.500" stroke="#707070" strokeWidth="1.500" />
          </svg>
        </div>
      </div>
      <div className="h-px shrink-0 bg-[#1a1f28]" />
      <Taskbar />
    </div>
  );
}
